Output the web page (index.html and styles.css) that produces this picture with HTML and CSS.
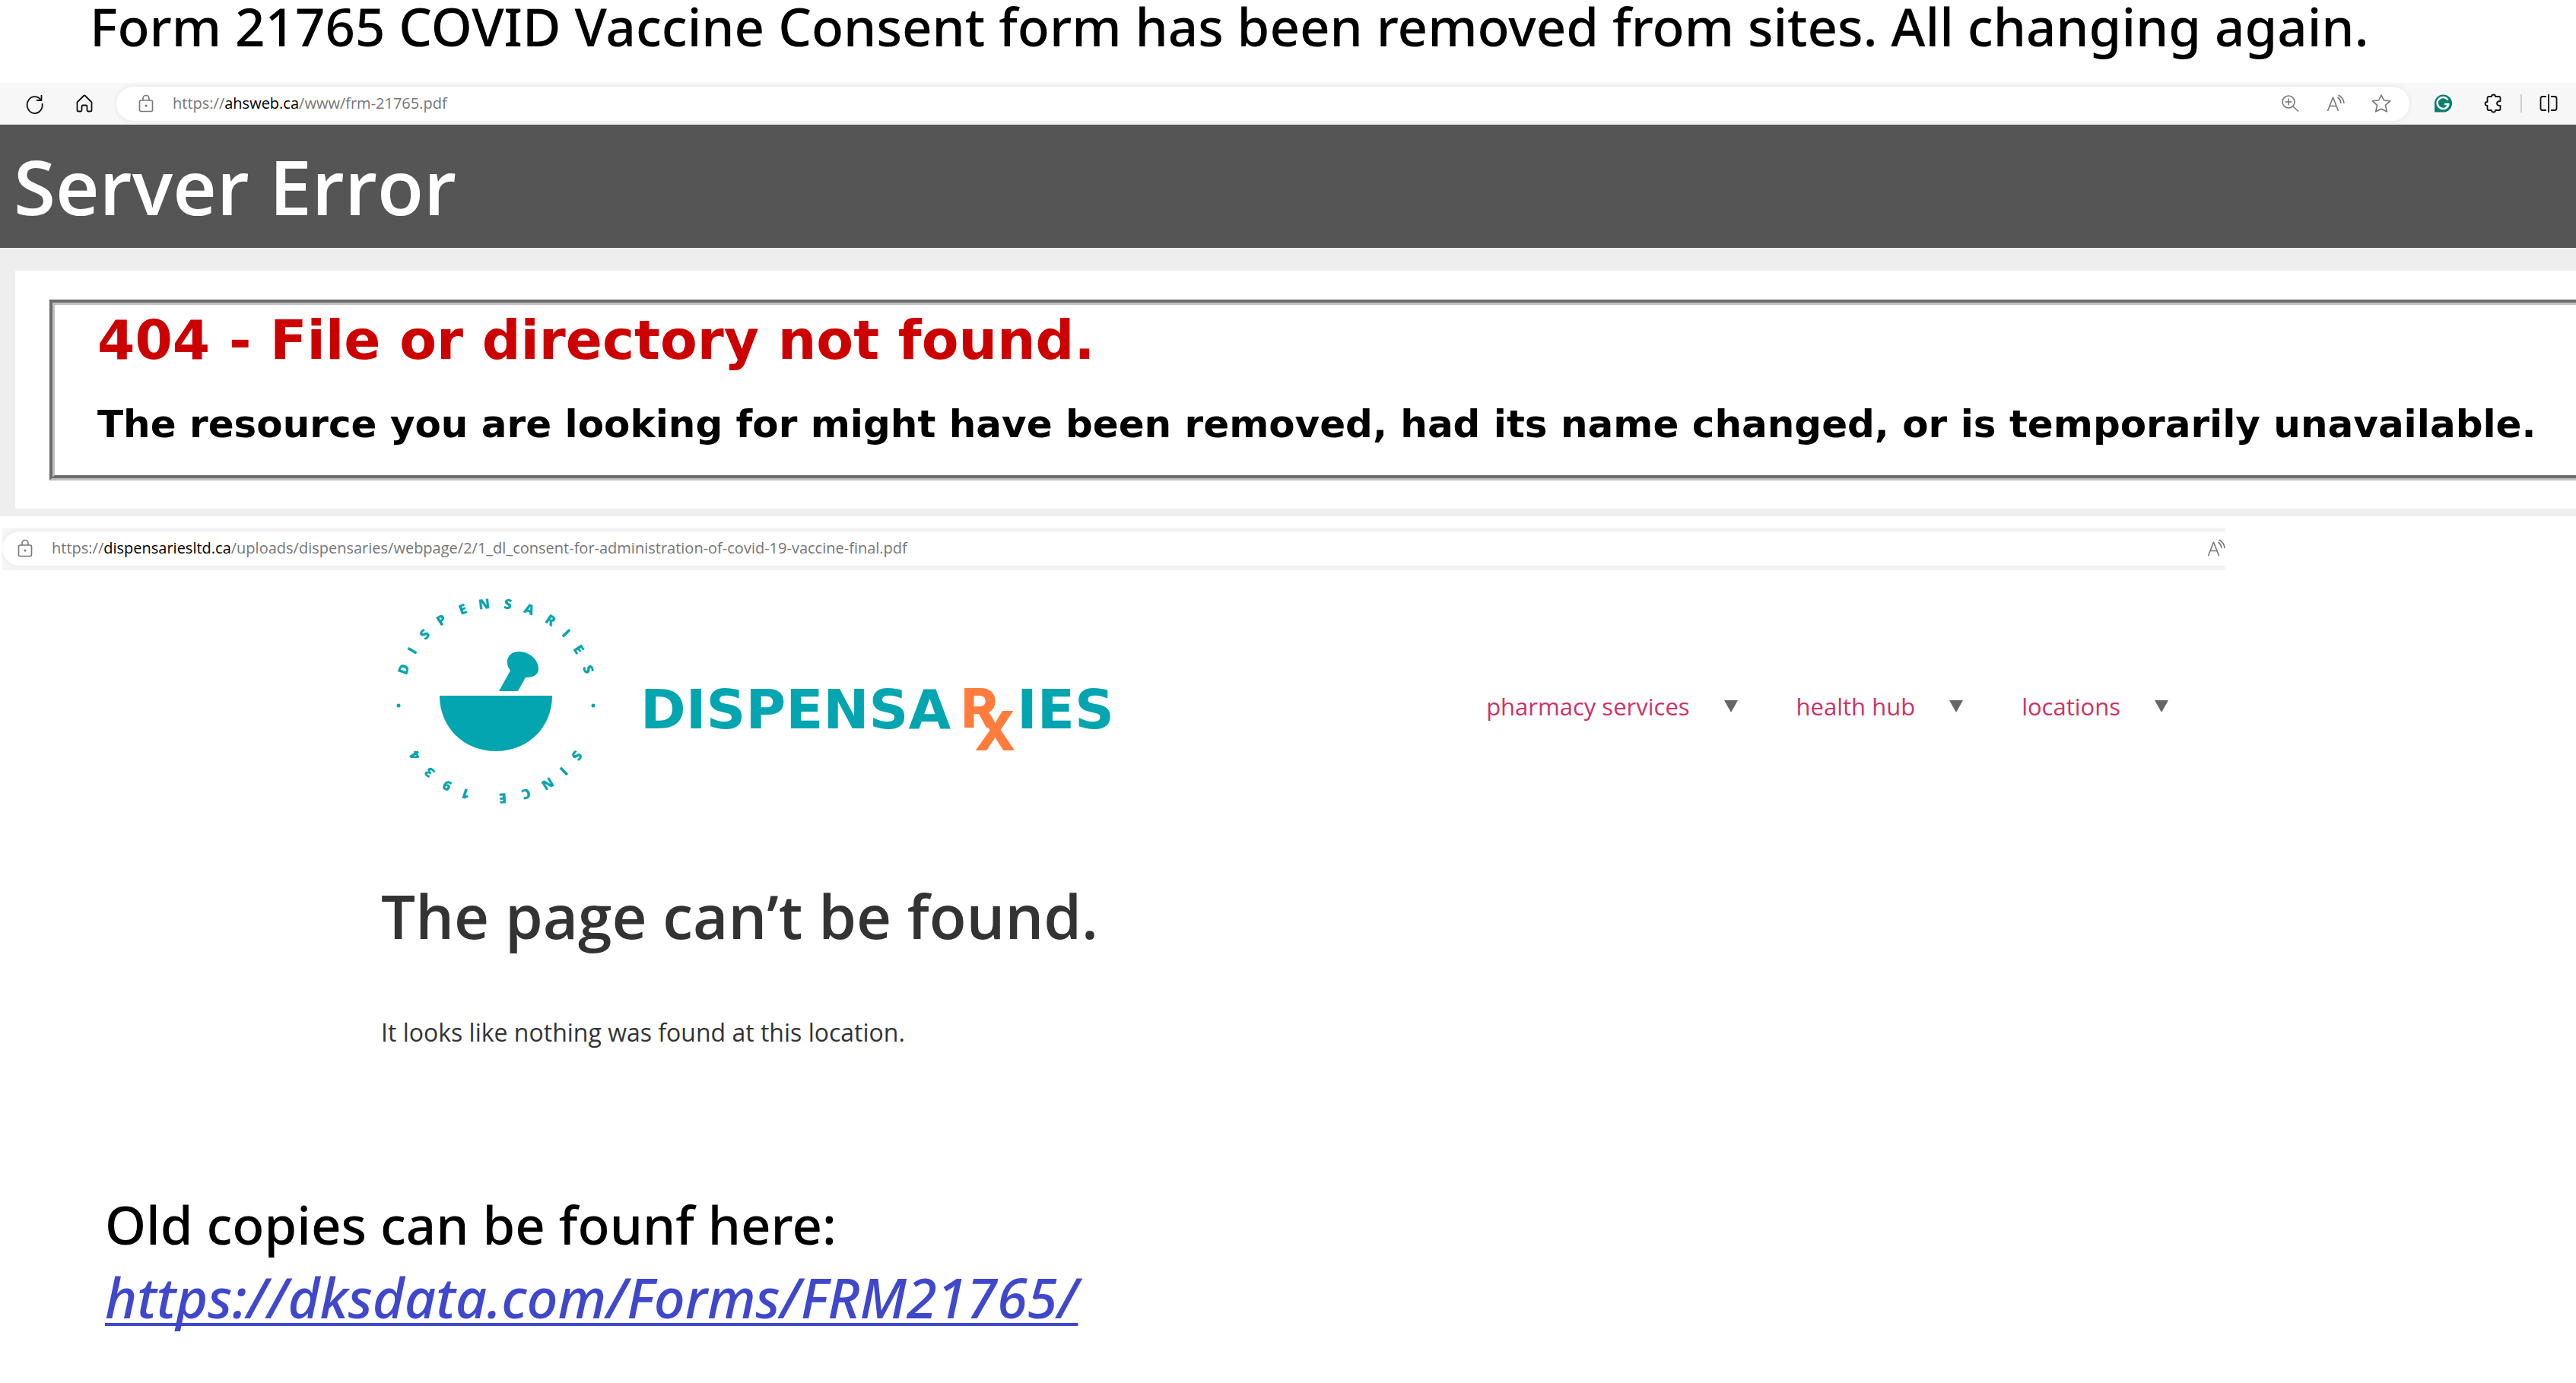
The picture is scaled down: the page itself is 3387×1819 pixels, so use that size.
FILE: index.html
```html
<!DOCTYPE html>
<html lang="en">
<head>
  <meta charset="UTF-8">
  <meta name="viewport" content="width=device-width, initial-scale=1.0">
  <title>Form 21765</title>
  <link rel="stylesheet" href="styles.css">
</head>
<body>
  <p class="note note-top">Form 21765 COVID Vaccine Consent form has been removed from sites. All changing again.</p>

  <!-- first browser -->
  <section class="browser">
    <div class="toolbar">
      <button class="icon" aria-label="Refresh">
        <svg viewBox="0 0 24 24"><path d="M21 8A10 11 0 1 0 22.500 12M21.500 1v7H15"/></svg>
      </button>
      <button class="icon" aria-label="Home">
        <svg viewBox="0 0 24 24"><path d="M2.500 10.500 11 2q1-1 2 0l8.500 8.500V21q0 1.500-1.500 1.500H17q-1.500 0-1.500-1.500v-5q0-1.500-1.500-1.500h-4q-1.500 0-1.500 1.500v5q0 1.500-1.500 1.500H4q-1.500 0-1.500-1.500z"/></svg>
      </button>
      <div class="address">
        <svg class="lock" viewBox="0 0 24 24"><rect x="3.500" y="8" width="17" height="14.500" rx="2"/><path d="M8 8V5.500a4 4 0 0 1 8 0V8"/><circle class="dot" cx="12" cy="15" r="1.500"/></svg>
        <p class="url">https://<b>ahsweb.ca</b>/www/frm-21765.pdf</p>
        <button class="icon" aria-label="Zoom">
          <svg viewBox="0 0 24 24"><circle cx="10" cy="10" r="8"/><path d="m16 16 7 6.500M10 5.500v9M5.500 10h9"/></svg>
        </button>
        <button class="icon" aria-label="Read aloud">
          <svg viewBox="0 0 24 24"><path d="M1.500 22 8.500 4l7 18M4 15.500h9M14.500 4q4 3 4.500 8M15.500 1q7 3.500 7.500 11"/></svg>
        </button>
        <button class="icon" aria-label="Favourites">
          <svg viewBox="0 0 24 24"><path d="m12 1 3.500 7 8 .8-6 5.500 1.800 8.500-7.300-3.500-7.300 3.500 1.800-8.500-6-5.500 8-.8z"/></svg>
        </button>
      </div>
      <button class="icon" aria-label="Grammarly">
        <svg viewBox="0 0 24 24"><path class="green" d="M1 23.500V12A11.500 11.500 0 1 1 12.500 23.500z"/><path class="white" d="M18.500 7.500A7.500 7.500 0 1 0 19.500 13H14"/></svg>
      </button>
      <button class="icon" aria-label="Extensions">
        <svg viewBox="0 0 24 24"><path d="M4.500 5Q4.500 3 6.500 3H10q0-2.500 2.500-2.500T15 3h4.500q2 0 2 2v4q-4.500 0-4.500 3t4.500 3v4q0 2-2 2H15q0 2.500-2.500 2.500T10 21H6.500q-2 0-2-2v-4Q1.500 15 1.500 12.500T4.500 10z"/></svg>
      </button>
      <span class="divider"></span>
      <button class="icon" aria-label="Split screen">
        <svg viewBox="0 0 24 24"><path d="M12 0v24M9 3H4Q1.500 3 1.500 5.500v13Q1.500 21 4 21h5M15 3h5q2.500 0 2.500 2.500v13Q22.500 21 20 21h-5"/></svg>
      </button>
    </div>
    <h1 class="server-error">Server Error</h1>
    <div class="error-body">
      <div class="error-card">
        <fieldset class="error-box">
          <h2>404 - File or directory not found.</h2>
          <h3>The resource you are looking for might have been removed, had its name changed, or is temporarily unavailable.</h3>
        </fieldset>
      </div>
    </div>
  </section>

  <!-- second browser -->
  <section class="browser browser-small">
    <div class="toolbar">
      <div class="address">
        <svg class="lock" viewBox="0 0 24 24"><rect x="3.500" y="8" width="17" height="14.500" rx="2"/><path d="M8 8V5.500a4 4 0 0 1 8 0V8"/><circle class="dot" cx="12" cy="15" r="1.500"/></svg>
        <p class="url">https://<b>dispensariesltd.ca</b>/uploads/dispensaries/webpage/2/1_dl_consent-for-administration-of-covid-19-vaccine-final.pdf</p>
        <button class="icon" aria-label="Read aloud">
          <svg viewBox="0 0 24 24"><path d="M1.500 22 8.500 4l7 18M4 15.500h9M14.500 4q4 3 4.500 8M15.500 1q7 3.500 7.500 11"/></svg>
        </button>
      </div>
    </div>
    <header class="site-header">
      <svg class="logo" viewBox="0 0 980 320" role="img" aria-label="Dispensaries, since 1934">
        <g class="ring" transform="translate(162 162)">
          <text transform="rotate(-71)" y="-122">D</text>
          <text transform="rotate(-59)" y="-122">I</text>
          <text transform="rotate(-47)" y="-122">S</text>
          <text transform="rotate(-34)" y="-122">P</text>
          <text transform="rotate(-20)" y="-122">E</text>
          <text transform="rotate(-7)" y="-122">N</text>
          <text transform="rotate(7)" y="-122">S</text>
          <text transform="rotate(20)" y="-122">A</text>
          <text transform="rotate(34)" y="-122">R</text>
          <text transform="rotate(46)" y="-122">I</text>
          <text transform="rotate(58)" y="-122">E</text>
          <text transform="rotate(71)" y="-122">S</text>
          <text transform="rotate(124)" y="-122">S</text>
          <text transform="rotate(136)" y="-122">I</text>
          <text transform="rotate(148)" y="-122">N</text>
          <text transform="rotate(162)" y="-122">C</text>
          <text transform="rotate(176)" y="-122">E</text>
          <text transform="rotate(198)" y="-122">1</text>
          <text transform="rotate(210)" y="-122">9</text>
          <text transform="rotate(223)" y="-122">3</text>
          <text transform="rotate(236)" y="-122">4</text>
          <circle cx="-128" cy="6" r="2.500"/>
          <circle cx="128" cy="6" r="2.500"/>
        </g>
        <!-- mortar and pestle -->
        <path class="teal" d="M88 155H236C236 197 204 228 162 228S88 197 88 155z"/>
        <path class="teal" d="m166 149 15-27c-9-13-2-25 11-25 14 0 27 11 26 24-1 7-7 10-17 10l-10 18z"/>
        <text class="word teal" x="352" y="198">DISPENSA</text>
        <text class="rx orange" x="774" y="197">R</text>
        <text class="rx orange" x="791" y="227">X</text>
        <text class="word teal" x="847" y="198">IES</text>
      </svg>
      <nav class="menu">
        <a href="#">pharmacy services</a><i class="arrow"></i>
        <a href="#">health hub</a><i class="arrow"></i>
        <a href="#">locations</a><i class="arrow"></i>
      </nav>
    </header>
    <main class="not-found">
      <h2>The page can’t be found.</h2>
      <p>It looks like nothing was found at this location.</p>
    </main>
  </section>

  <div class="note note-bottom">
    <p>Old copies can be founf here:</p>
    <a href="https://dksdata.com/Forms/FRM21765/">https://dksdata.com/Forms/FRM21765/</a>
  </div>
</body>
</html>
```

FILE: styles.css
```css
* {
  margin: 0;
  padding: 0;
  box-sizing: border-box;
}

body {
  background: #fff;
  color: #000;
  font-family: "Open Sans", "Noto Sans", sans-serif;
  overflow-x: hidden;
}

.note {
  font-family: "Noto Sans", sans-serif;
  font-size: 69px;
  font-weight: 500;
  line-height: 96px;
  white-space: nowrap;
}

.note-top {
  height: 109px;
  padding-left: 118px;
  line-height: 68px;
}

/* toolbar */
.toolbar {
  display: flex;
  align-items: center;
  height: 55px;
  padding: 0 24px 0 33px;
  background: #f7f7f7;
  border-bottom: 1px solid #e8e8e8;
}

.icon {
  width: 24px;
  height: 24px;
  border: 0;
  background: none;
  flex: none;
}

.icon svg,
.lock {
  display: block;
  width: 24px;
  height: 24px;
  fill: none;
  stroke: #111;
  stroke-width: 1.8;
  stroke-linejoin: round;
  overflow: visible;
  flex: none;
}

.toolbar > .icon {
  margin-right: 42px;
}

.toolbar > .address {
  margin: 0 32px 0 -12px;
}

.address {
  flex: 1;
  display: flex;
  align-items: center;
  gap: 36px;
  height: 45px;
  padding: 0 25px 0 27px;
  border-radius: 23px;
  background: #fff;
  box-shadow: 0 0 6px #e4e4e4;
}

.address svg {
  stroke: #767676;
  stroke-width: 1.6;
}

.lock .dot {
  fill: #767676;
  stroke: none;
}

.url {
  flex: 1;
  margin-left: -13px;
  padding-bottom: 2px;
  color: #767676;
  font-size: 20px;
  white-space: nowrap;
}

.url b {
  color: #000;
  font-weight: 400;
}

.icon .green {
  fill: #087e6c;
  stroke: none;
}

.icon .white {
  stroke: #fff;
  stroke-width: 2.5;
}

.divider {
  width: 2px;
  height: 24px;
  margin: 0 23px 0 -18px;
  background: #ccc;
}

.toolbar > .icon:last-child {
  margin-right: 0;
}

/* 404 page */
.server-error {
  height: 162px;
  padding-left: 18px;
  background: #555;
  color: #fff;
  font-size: 100px;
  font-weight: 600;
  line-height: 160px;
}

.error-body {
  padding: 30px 0 10px 20px;
  background: #eee;
}

.error-card {
  padding: 38px 0 37px 45px;
  background: #fff;
}

.error-box {
  min-width: 0;
  height: 238px;
  padding: 0 56px;
  border: 7px groove #c0c0c0;
  border-right: 0;
  font-family: "DejaVu Sans", sans-serif;
  white-space: nowrap;
}

.error-box h2 {
  margin-bottom: 18px;
  color: #c00;
  font-size: 71px;
  line-height: 94px;
}

.error-box h3 {
  font-size: 50px;
  line-height: 90px;
}

/* pharmacy page */
.browser-small {
  width: 2923px;
  max-width: 100%;
  margin: 15px 0 0 3px;
  overflow: hidden;
}

.browser-small .toolbar {
  padding: 0;
}

.browser-small .address {
  margin: 0;
  padding: 0 0 0 18px;
  border-radius: 23px 0 0 23px;
}

.site-header {
  display: flex;
  align-items: center;
  justify-content: space-between;
  padding: 11px 75px 0 487px;
}

.logo {
  width: 980px;
  height: 320px;
  flex: none;
}

.ring text {
  font-size: 18px;
  font-weight: 800;
  text-anchor: middle;
}

.word {
  font-family: "DejaVu Sans", sans-serif;
  font-size: 72px;
  font-weight: 700;
}

.rx {
  font-family: Inter, sans-serif;
  font-size: 72px;
  font-weight: 800;
}

.ring,
.teal {
  fill: #03a5b0;
}

.orange {
  fill: #ff7c3c;
}

.menu {
  display: flex;
  align-items: center;
  padding-top: 18px;
  font-size: 31px;
  white-space: nowrap;
}

.menu a {
  color: #c36;
  text-decoration: none;
}

.arrow {
  margin: 0 77px 0 45px;
  border: 9px solid transparent;
  border-top: 16px solid #666;
  border-bottom: 0;
}

.arrow:last-child {
  margin-right: 0;
}

.not-found {
  padding: 68px 0 0 498px;
  color: #333;
}

.not-found h2 {
  font-size: 80px;
  font-weight: 600;
  line-height: 112px;
}

.not-found p {
  margin-top: 74px;
  font-size: 32px;
  line-height: 48px;
}

.note-bottom {
  padding: 180px 0 0 138px;
}

.note-bottom a {
  color: #3f48cc;
  font-size: 72px;
  font-style: italic;
  text-decoration-thickness: 4px;
  text-underline-offset: 6px;
  text-decoration-skip-ink: none;
}
```
